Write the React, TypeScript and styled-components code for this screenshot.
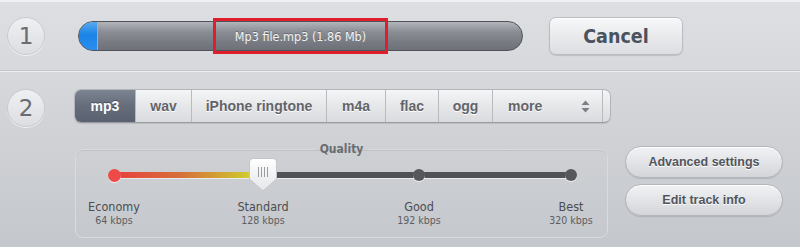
import React from "react";
import styled, { createGlobalStyle } from "styled-components";

const GlobalStyle = createGlobalStyle`
  html, body {
    margin: 0;
    padding: 0;
  }
  body {
    width: 800px;
    height: 247px;
    overflow: hidden;
    font-family: "DejaVu Sans Condensed", "DejaVu Sans", sans-serif;
  }
`;

const Page = styled.div`
  width: 800px;
  height: 247px;
  background: linear-gradient(#dedfe2, #d2d4d7 45%, #c4c7cc);
  border-top: 2px solid #eef0f1;
  box-sizing: border-box;
`;

const StepRow = styled.div`
  display: flex;
  align-items: center;
  height: 68px;
  padding-left: 7px;
  box-sizing: border-box;
`;

const Divider = styled.div`
  height: 2px;
  border-top: 1px solid #c4c6ca;
  border-bottom: 1px solid #eceef0;
  box-sizing: border-box;
`;

const StepBody = styled.div`
  display: flex;
  align-items: flex-start;
  padding: 17px 0 0 7px;
`;

const StepCircle = styled.div`
  flex: none;
  width: 38px;
  height: 38px;
  border-radius: 50%;
  background: linear-gradient(#eef0f2, #dcdee2);
  border: 1px solid #c9cbcf;
  box-sizing: border-box;
  box-shadow: 0 1px 0 rgba(255, 255, 255, 0.7);
  display: flex;
  align-items: center;
  justify-content: center;
  font-family: "DejaVu Sans", sans-serif;
  font-size: 23px;
  color: #6a6c70;
`;

const Progress = styled.div`
  position: relative;
  margin-left: 33px;
  width: 445px;
  height: 30px;
  border-radius: 15px;
  border: 1px solid #50545a;
  box-sizing: border-box;
  background: linear-gradient(#b2b5ba, #8a8d94 35%, #797c83 70%, #6d7078);
  display: flex;
  align-items: center;
  justify-content: center;
`;

const ProgressFill = styled.div`
  position: absolute;
  left: 0;
  top: 0;
  bottom: 0;
  border-radius: 14px 0 0 14px;
  background: linear-gradient(#5aa8f0, #1a84e6 45%, #2c8ef0);
  border-right: 1px solid #79b8f4;
`;

const FileName = styled.div`
  position: relative;
  width: 175px;
  height: 36px;
  box-sizing: border-box;
  border: 3px solid #e11d2b;
  display: flex;
  align-items: center;
  justify-content: center;
  color: #f2f3f5;
  font-size: 12.5px;
  text-shadow: 0 -1px 0 rgba(0, 0, 0, 0.25);
  white-space: nowrap;
`;

const CancelButton = styled.button`
  margin-left: 26px;
  width: 134px;
  height: 38px;
  border-radius: 7px;
  border: 1px solid #b9bcc1;
  background: linear-gradient(#f7f8f9, #e9eaec 50%, #dcdee2);
  box-shadow: 0 1px 1px rgba(0, 0, 0, 0.12), inset 0 1px 0 #fff;
  font-family: "DejaVu Sans Condensed", "DejaVu Sans", sans-serif;
  font-weight: bold;
  font-size: 19.5px;
  color: #4a5260;
  padding: 0;
`;

const Content = styled.div`
  margin-left: 29px;
  display: flex;
  flex-direction: column;
  gap: 24px;
`;

const Tabs = styled.div`
  display: flex;
  height: 34px;
  width: 537px;
  border-radius: 7px;
  border: 1px solid #b2b5ba;
  border-bottom-color: #989ba1;
  box-sizing: border-box;
  background: linear-gradient(#f4f5f6, #e6e7e9 50%, #d9dbde);
  box-shadow: 0 1px 1px rgba(0, 0, 0, 0.1);
  overflow: hidden;
`;

const Tab = styled.div<{ $w: number; $active?: boolean }>`
  flex: none;
  width: ${(p) => p.$w}px;
  display: flex;
  align-items: center;
  justify-content: center;
  box-sizing: border-box;
  border-right: 1px solid #b7babe;
  font-family: "Liberation Sans", Arial, sans-serif;
  font-weight: bold;
  font-size: 14px;
  color: ${(p) => (p.$active ? "#fff" : "#62646a")};
  background: ${(p) =>
    p.$active ? "linear-gradient(#7c8391, #656c7a 50%, #5a6170)" : "transparent"};
  text-shadow: ${(p) => (p.$active ? "0 -1px 0 rgba(0,0,0,0.3)" : "0 1px 0 #fff")};
`;

const MoreTab = styled(Tab)`
  && {
    justify-content: space-between;
    padding: 0 12px 0 15px;
  }
`;

const Updown = styled.svg`
  display: block;
`;

const Cap = styled.div`
  flex: 1;
`;

const QualityRow = styled.div`
  display: flex;
  align-items: flex-start;
  margin-top: 2px;
`;

const Fieldset = styled.fieldset`
  margin: -6px 0 0 1px;
  width: 533px;
  height: 95px;
  box-sizing: border-box;
  padding: 0;
  border: 1px solid #d9dbde;
  border-radius: 8px;
  box-shadow: inset 0 1px 0 rgba(160, 163, 168, 0.35);
`;

const Legend = styled.legend`
  margin: 0 auto;
  padding: 0 6px;
  font-weight: bold;
  font-size: 12px;
  color: #6a6c70;
  line-height: 12px;
`;

const Slider = styled.div`
  position: relative;
  margin: 12px 0 0 38px;
  width: 457px;
  height: 70px;
`;

const Track = styled.div`
  position: absolute;
  left: 0;
  right: 0;
  top: 5px;
  height: 6px;
  border-radius: 3px;
  background: #505256;
  box-shadow: 0 1px 0 rgba(255, 255, 255, 0.6);
`;

const TrackFill = styled.div`
  position: absolute;
  left: 0;
  top: 0;
  bottom: 0;
  border-radius: 3px;
  background: linear-gradient(90deg, #e8403e, #d6703a 45%, #cfc02e 85%, #dcdf3a);
`;

const Stop = styled.div`
  position: absolute;
  top: 0;
  width: 100px;
  margin-left: -50px;
  display: flex;
  flex-direction: column;
  align-items: center;
`;

const Knob = styled.div`
  position: relative;
  height: 16px;
  width: 100%;
  display: flex;
  align-items: center;
  justify-content: center;
`;

const Dot = styled.div<{ $color: string; $size: number }>`
  width: ${(p) => p.$size}px;
  height: ${(p) => p.$size}px;
  border-radius: 50%;
  background: ${(p) => p.$color};
  box-shadow: 0 1px 0 rgba(255, 255, 255, 0.7);
`;

const Thumb = styled.svg`
  position: absolute;
  top: -10px;
  left: 50%;
  margin-left: -15px;
`;

const StopName = styled.div`
  margin-top: 17px;
  font-size: 12.5px;
  line-height: 14px;
  color: #4b4d52;
`;

const StopRate = styled.div`
  font-size: 10.5px;
  line-height: 13px;
  color: #5c5e63;
`;

const SideButtons = styled.div`
  margin-left: 17px;
  margin-top: -3px;
  display: flex;
  flex-direction: column;
  gap: 6px;
`;

const PillButton = styled.button`
  width: 158px;
  height: 32px;
  border-radius: 16px;
  border: 1px solid #b3b6bb;
  background: linear-gradient(#f1f2f4, #e2e4e7 50%, #d3d5d9);
  box-shadow: 0 1px 1px rgba(0, 0, 0, 0.12), inset 0 1px 0 #fff;
  font-family: "Liberation Sans", Arial, sans-serif;
  font-weight: bold;
  font-size: 12.5px;
  color: #51555d;
  text-shadow: 0 1px 0 #fff;
  padding: 0;
`;

const formats = [
  { label: "mp3", w: 61, active: true },
  { label: "wav", w: 56 },
  { label: "iPhone ringtone", w: 135 },
  { label: "m4a", w: 59 },
  { label: "flac", w: 53 },
  { label: "ogg", w: 54 },
];

const stops = [
  { name: "Economy", rate: "64 kbps", pos: 0 },
  { name: "Standard", rate: "128 kbps", pos: 149 },
  { name: "Good", rate: "192 kbps", pos: 305 },
  { name: "Best", rate: "320 kbps", pos: 457 },
];

const current = 1;

export default function App() {
  return (
    <>
      <GlobalStyle />
      <Page>
        <StepRow>
          <StepCircle>1</StepCircle>
          <Progress>
            <ProgressFill style={{ width: 18 }} />
            <FileName>Mp3 file.mp3 (1.86 Mb)</FileName>
          </Progress>
          <CancelButton>Cancel</CancelButton>
        </StepRow>
        <Divider />
        <StepBody>
          <StepCircle>2</StepCircle>
          <Content>
            <Tabs>
              {formats.map((f) => (
                <Tab key={f.label} $w={f.w} $active={f.active}>
                  {f.label}
                </Tab>
              ))}
              <MoreTab $w={110}>
                <span>more</span>
                <Updown width="9" height="13" viewBox="0 0 9 13">
                  <path d="M4.5 0.5 L8.5 5 H0.5 Z" fill="#7b7e84" />
                  <path d="M4.5 12.5 L8.5 8 H0.5 Z" fill="#7b7e84" />
                </Updown>
              </MoreTab>
              <Cap />
            </Tabs>
            <QualityRow>
              <Fieldset>
                <Legend>Quality</Legend>
                <Slider>
                  <Track>
                    <TrackFill style={{ width: stops[current].pos }} />
                  </Track>
                  {stops.map((s, i) => (
                    <Stop key={s.name} style={{ left: s.pos }}>
                      <Knob>
                        {i === current ? (
                          <Thumb width="30" height="36" viewBox="0 0 30 36">
                            <defs>
                              <linearGradient id="tg" x1="0" y1="0" x2="0" y2="1">
                                <stop offset="0" stopColor="#ffffff" />
                                <stop offset="1" stopColor="#e4e6e9" />
                              </linearGradient>
                            </defs>
                            <path
                              d="M5 1.5 H25 Q28.5 1.5 28.5 5 V22 L15 34 L1.5 22 V5 Q1.5 1.5 5 1.5 Z"
                              fill="url(#tg)"
                              stroke="#c3c6ca"
                            />
                            <path
                              d="M10.5 10 V20 M13.5 10 V20 M16.5 10 V20 M19.5 10 V20"
                              stroke="#9a9da2"
                              strokeWidth="1"
                            />
                          </Thumb>
                        ) : (
                          <Dot
                            $color={i === 0 ? "#ee4a48" : "#55575b"}
                            $size={i === 0 ? 13 : 12}
                          />
                        )}
                      </Knob>
                      <StopName>{s.name}</StopName>
                      <StopRate>{s.rate}</StopRate>
                    </Stop>
                  ))}
                </Slider>
              </Fieldset>
              <SideButtons>
                <PillButton>Advanced settings</PillButton>
                <PillButton>Edit track info</PillButton>
              </SideButtons>
            </QualityRow>
          </Content>
        </StepBody>
      </Page>
    </>
  );
}
